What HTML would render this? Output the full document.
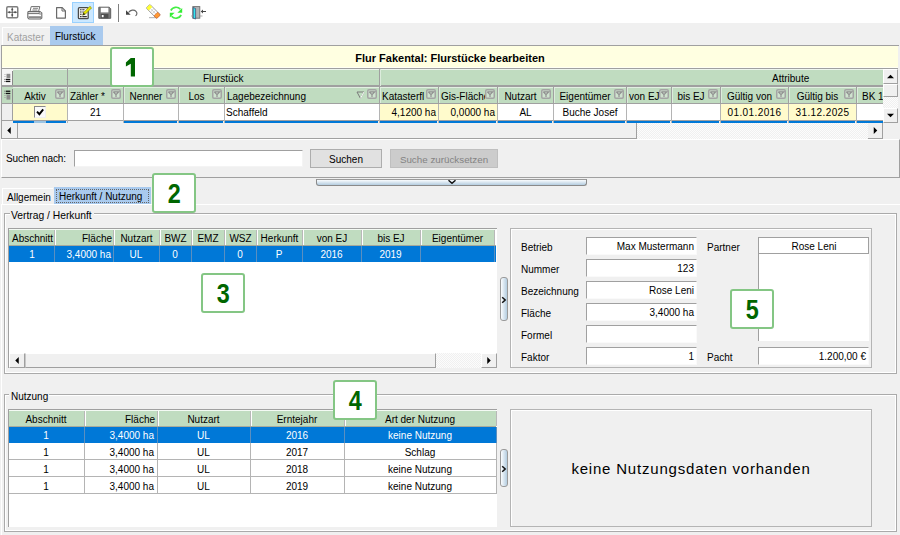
<!DOCTYPE html>
<html><head><meta charset="utf-8"><style>
*{box-sizing:border-box;margin:0;padding:0}
html,body{width:900px;height:535px;overflow:hidden}
body{position:relative;background:#f0f0f0;font-family:"Liberation Sans",sans-serif;font-size:10px;color:#000}
.a{position:absolute}
.t{position:absolute;white-space:nowrap;line-height:16px;height:16px}
.box{position:absolute;width:44px;height:40px;border:2px solid #84c684;border-radius:3px;background:#fff;color:#006600;font-weight:bold;font-size:26px;text-align:center;line-height:37px}
.inp{position:absolute;background:#fff;border-top:1px solid #a0a0a0;border-left:1px solid #a0a0a0;border-right:1px solid #fafafa;border-bottom:1px solid #fafafa;height:18px;line-height:16px;padding-right:2px;text-align:right;white-space:nowrap}
.btn3d{position:absolute;background:#f0f0f0;border-top:1px solid #fff;border-left:1px solid #fff;border-right:1px solid #a0a0a0;border-bottom:1px solid #a0a0a0}
</style></head><body>
<div class="a" style="left:0px;top:0px;width:900px;height:23px;background:#fff"></div>
<div class="a" style="left:72px;top:2px;width:22px;height:21px;background:#cce8ff;border:1px solid #99d1ff"></div>
<div class="a" style="left:118px;top:4px;width:1px;height:18px;background:#808080"></div>
<svg class="a" style="left:0;top:0" width="220" height="23" viewBox="0 0 220 23">
<!-- grid move -->
<rect x="6.75" y="6.75" width="11" height="11" rx="1.2" fill="#fff" stroke="#808080" stroke-width="1.5"/>
<path d="M12.25 7.5V17.2M7.5 12.25H17.2" stroke="#555" stroke-width="0.9"/>
<circle cx="12.25" cy="9.4" r="1" fill="#505050"/><circle cx="12.25" cy="15.1" r="1" fill="#505050"/>
<circle cx="9.4" cy="12.25" r="1" fill="#505050"/><circle cx="15.1" cy="12.25" r="1" fill="#505050"/>
<!-- printer -->
<path d="M31.2 6.6h8.6l-1.2 4.8h-8.6z" fill="#fff" stroke="#707070" stroke-width="1"/>
<path d="M33 8.3h5M32.4 10h5" stroke="#707070" stroke-width="0.9"/>
<path d="M28.2 11.6h11.6l2 1.4v5l-1.2 1h-11.6l-1.2-1.2v-5z" fill="#fff" stroke="#6a6a6a" stroke-width="1.1"/>
<path d="M28 13.6h12.5" stroke="#707070" stroke-width="1"/>
<path d="M28.5 16.2h12.5v2h-12.5z" fill="#8a8a8a"/>
<circle cx="40.2" cy="13" r="1.2" fill="#eee" stroke="#666" stroke-width="0.7"/>
<!-- new doc -->
<path d="M56.6 7.6h5.6l3.2 3.2v7.3h-8.8z" fill="#fff" stroke="#6a6a6a" stroke-width="1.2" stroke-linejoin="round"/>
<path d="M62 7.6v3.4h3.4" fill="none" stroke="#6a6a6a" stroke-width="1"/>
<!-- edit -->
<rect x="78.4" y="7.7" width="9.8" height="11" rx="1" fill="#f4f4f4" stroke="#4a4a4a" stroke-width="1.3"/>
<path d="M80 9.8h1.6M82.3 9.8h2.2M80 12h1.6M82.3 12h1.5M80 14.2h1.6M80 16.6h1.6M82.3 16.6h4.5" stroke="#333" stroke-width="1.1"/>
<path d="M82.6 15.2l1-2.6 6.3-6.3 1.7 1.6-6.3 6.3z" fill="#e8e800" stroke="#7a7a00" stroke-width="0.6"/>
<path d="M82.6 15.2l1-2.6 1.6 1.6z" fill="#222"/>
<!-- save -->
<path d="M98.8 7.2h10.4l1.5 1.5v9.6h-11.9z" fill="#7a7a7a" stroke="#606060" stroke-width="1" stroke-linejoin="round"/>
<rect x="100.8" y="7.8" width="7.6" height="4.6" fill="#fff"/>
<rect x="100.8" y="14" width="7.6" height="4.3" fill="#505050"/>
<rect x="101.8" y="15" width="1.8" height="2.2" fill="#fff"/>
<!-- separator -->
<!-- undo -->
<path d="M128.5 12.5c2-2.5 5.5-3.2 7.5-1.2 1.5 1.5 1 3.5-0.5 4.5" fill="none" stroke="#666" stroke-width="1.2"/>
<path d="M126 10.2v4.6h4.7z" fill="#444"/>
<!-- eraser -->
<path d="M149 17.6h8" stroke="#bbb" stroke-width="1.2"/>
<g transform="rotate(-45 153.5 11.8)">
<rect x="151" y="4" width="5.2" height="14.5" rx="0.8" fill="#fff" stroke="#777" stroke-width="0.7"/>
<rect x="151.2" y="4" width="4.8" height="3.6" fill="#ffff33"/>
<path d="M151.5 9.8h4.4M151.5 12.2h4.4M153.6 7.6v7.5" stroke="#bbb" stroke-width="0.6"/>
<path d="M151 15h5.2v2.8a1.2 1.2 0 0 1-1.2 1.2h-2.8a1.2 1.2 0 0 1-1.2-1.2z" fill="#ff9933" stroke="#c05020" stroke-width="0.5"/>
</g>
<!-- refresh -->
<path d="M170.8 10.5a5.8 5.8 0 0 1 9.6-1.2" fill="none" stroke="#44ee44" stroke-width="1.7"/>
<path d="M182.2 8v4.8h-4.8z" fill="#33ee33"/>
<path d="M181.2 15a5.8 5.8 0 0 1-9.6 1.2" fill="none" stroke="#44ee44" stroke-width="1.7"/>
<path d="M169.8 17.5v-4.8h4.8z" fill="#33ee33"/>
<!-- door -->
<rect x="192.8" y="6.6" width="7" height="11.6" fill="#b4b4b4" stroke="#6e6e6e" stroke-width="0.9"/>
<path d="M193.2 7.5l2.4 1v10.6l-2.4-1z" fill="#33e6ee" stroke="#336" stroke-width="0.6"/>
<path d="M191 16h2M200 16h2.5" stroke="#999" stroke-width="0.8"/>
<path d="M201.5 11.5h4.5" stroke="#444" stroke-width="1"/>
<path d="M200.8 11.5l2.2-2v4z" fill="#444"/>
</svg>
<div class="a" style="left:2px;top:27px;width:48px;height:18px;background:#f0f0f0;border-top:1px solid #fff;border-left:1px solid #fff"></div>
<div class="t" style="left:7px;top:30px;color:#a0a0a0">Kataster</div>
<div class="a" style="left:50px;top:26px;width:53px;height:19px;background:#a9caee"></div>
<div class="t" style="left:55px;top:29px;">Flurstück</div>
<div class="a" style="left:1px;top:45px;width:898px;height:94px;border-top:1px solid #a0a0a0;border-left:1px solid #a0a0a0;background:#f0f0f0"></div>
<div class="a" style="left:1px;top:138px;width:637px;height:1px;background:#a0a0a0"></div>
<div class="a" style="left:868px;top:138px;width:15px;height:1px;background:#a0a0a0"></div>
<div class="a" style="left:2px;top:46px;width:896px;height:22px;background:#ffffe1"></div>
<div class="t" style="left:0px;top:50px;width:900px;text-align:center;font-weight:bold;font-size:11px">Flur Fakental: Flurstücke bearbeiten</div>
<div class="a" style="left:2px;top:67px;width:896px;height:1px;background:#fffff4"></div>
<div class="a" style="left:2px;top:68px;width:896px;height:1px;background:#a0a0a0"></div>
<div class="a" style="left:2px;top:69px;width:11px;height:17px;background:#f6f6f6"></div>
<div class="a" style="left:13px;top:69px;width:870px;height:17px;background:#c0dcc0"></div>
<div class="a" style="left:13px;top:69px;width:870px;height:1px;background:#eef6ee"></div>
<div class="a" style="left:2px;top:85px;width:881px;height:2px;background:#a0a0a0"></div>
<div class="a" style="left:13px;top:87px;width:870px;height:1px;background:#e2efe2"></div>
<div class="a" style="left:2px;top:87px;width:11px;height:17px;background:#c0dcc0"></div>
<div class="a" style="left:13px;top:88px;width:870px;height:16px;background:#c0dcc0"></div>
<div class="a" style="left:2px;top:103px;width:881px;height:1px;background:#a0a0a0"></div>
<svg class="a" style="left:2px;top:71px" width="12" height="16" viewBox="0 0 12 16"><rect x="4.5" y="2.8" width="3.8" height="4.2" fill="#8c8c8c"/><path d="M2.3 3.5h1.4M2.3 5.5h1.4" stroke="#c4c4c4" stroke-width="1"/><rect x="4" y="7.8" width="4.3" height="1.3" fill="#111"/><rect x="4" y="9.8" width="4.3" height="1.3" fill="#111"/><path d="M2.3 8.4h1.4M2.3 10.4h1.4" stroke="#666" stroke-width="1"/></svg>
<svg class="a" style="left:2px;top:88px" width="12" height="16" viewBox="0 0 12 16"><rect x="4" y="2.6" width="4.3" height="1.3" fill="#111"/><rect x="4" y="4.8" width="4.3" height="1.3" fill="#111"/><path d="M2.3 3.2h1.4M2.3 5.4h1.4" stroke="#666" stroke-width="1"/><rect x="4.5" y="6.8" width="3.8" height="4.8" fill="#8c8c8c"/><path d="M2.3 7.5h1.4M2.3 9.5h1.4" stroke="#a8a8a8" stroke-width="1"/></svg>
<div class="a" style="left:2px;top:104px;width:11px;height:16px;background:#efefef"></div>
<div class="a" style="left:13px;top:104px;width:870px;height:16px;background:#fff"></div>
<div class="a" style="left:2px;top:120px;width:881px;height:1px;background:#a0a0a0"></div>
<div class="a" style="left:12px;top:71px;width:1px;height:14px;background:#8a8a8a"></div>
<div class="a" style="left:12px;top:89px;width:1px;height:14px;background:#8a8a8a"></div>
<div class="a" style="left:12px;top:104px;width:1px;height:17px;background:#a0a0a0"></div>
<div class="a" style="left:67px;top:87px;width:1px;height:17px;background:#a0a0a0"></div>
<div class="a" style="left:67px;top:104px;width:1px;height:19px;background:#b4b4b4"></div>
<div class="a" style="left:68px;top:88px;width:1px;height:15px;background:#dcecdc"></div>
<div class="a" style="left:123px;top:87px;width:1px;height:17px;background:#a0a0a0"></div>
<div class="a" style="left:123px;top:104px;width:1px;height:19px;background:#b4b4b4"></div>
<div class="a" style="left:124px;top:88px;width:1px;height:15px;background:#dcecdc"></div>
<div class="a" style="left:178px;top:87px;width:1px;height:17px;background:#a0a0a0"></div>
<div class="a" style="left:178px;top:104px;width:1px;height:19px;background:#b4b4b4"></div>
<div class="a" style="left:179px;top:88px;width:1px;height:15px;background:#dcecdc"></div>
<div class="a" style="left:224px;top:87px;width:1px;height:17px;background:#a0a0a0"></div>
<div class="a" style="left:224px;top:104px;width:1px;height:19px;background:#b4b4b4"></div>
<div class="a" style="left:225px;top:88px;width:1px;height:15px;background:#dcecdc"></div>
<div class="a" style="left:379px;top:87px;width:1px;height:17px;background:#a0a0a0"></div>
<div class="a" style="left:379px;top:104px;width:1px;height:19px;background:#b4b4b4"></div>
<div class="a" style="left:380px;top:88px;width:1px;height:15px;background:#dcecdc"></div>
<div class="a" style="left:438px;top:87px;width:1px;height:17px;background:#a0a0a0"></div>
<div class="a" style="left:438px;top:104px;width:1px;height:19px;background:#b4b4b4"></div>
<div class="a" style="left:439px;top:88px;width:1px;height:15px;background:#dcecdc"></div>
<div class="a" style="left:497px;top:87px;width:1px;height:17px;background:#a0a0a0"></div>
<div class="a" style="left:497px;top:104px;width:1px;height:19px;background:#b4b4b4"></div>
<div class="a" style="left:498px;top:88px;width:1px;height:15px;background:#dcecdc"></div>
<div class="a" style="left:553px;top:87px;width:1px;height:17px;background:#a0a0a0"></div>
<div class="a" style="left:553px;top:104px;width:1px;height:19px;background:#b4b4b4"></div>
<div class="a" style="left:554px;top:88px;width:1px;height:15px;background:#dcecdc"></div>
<div class="a" style="left:626px;top:87px;width:1px;height:17px;background:#a0a0a0"></div>
<div class="a" style="left:626px;top:104px;width:1px;height:19px;background:#b4b4b4"></div>
<div class="a" style="left:627px;top:88px;width:1px;height:15px;background:#dcecdc"></div>
<div class="a" style="left:671px;top:87px;width:1px;height:17px;background:#a0a0a0"></div>
<div class="a" style="left:671px;top:104px;width:1px;height:19px;background:#b4b4b4"></div>
<div class="a" style="left:672px;top:88px;width:1px;height:15px;background:#dcecdc"></div>
<div class="a" style="left:720px;top:87px;width:1px;height:17px;background:#a0a0a0"></div>
<div class="a" style="left:720px;top:104px;width:1px;height:19px;background:#b4b4b4"></div>
<div class="a" style="left:721px;top:88px;width:1px;height:15px;background:#dcecdc"></div>
<div class="a" style="left:788px;top:87px;width:1px;height:17px;background:#a0a0a0"></div>
<div class="a" style="left:788px;top:104px;width:1px;height:19px;background:#b4b4b4"></div>
<div class="a" style="left:789px;top:88px;width:1px;height:15px;background:#dcecdc"></div>
<div class="a" style="left:856px;top:87px;width:1px;height:17px;background:#a0a0a0"></div>
<div class="a" style="left:856px;top:104px;width:1px;height:19px;background:#b4b4b4"></div>
<div class="a" style="left:857px;top:88px;width:1px;height:15px;background:#dcecdc"></div>
<div class="a" style="left:67px;top:69px;width:1px;height:17px;background:#a0a0a0"></div>
<div class="a" style="left:379px;top:69px;width:1px;height:17px;background:#a0a0a0"></div>
<div class="a" style="left:380px;top:69px;width:1px;height:17px;background:#dcecdc"></div>
<div class="t" style="left:203px;top:71px;">Flurstück</div>
<div class="t" style="left:772px;top:71px;">Attribute</div>
<div class="t" style="left:13px;top:89px;width:44px;text-align:center;overflow:hidden">Aktiv</div>
<svg class="a" style="left:55px;top:89px" width="10" height="10" viewBox="0 0 10 10"><rect x="0.75" y="0.75" width="8.5" height="8.5" rx="1.2" fill="#cfe3cf" stroke="#a4a4a4" stroke-width="1.5"/><path d="M2.3 2.8h5.4L5 5.6 2.3 2.8M5 5.4v2.6" fill="none" stroke="#909090" stroke-width="1.2"/></svg>
<div class="t" style="left:70px;top:89px;width:41px;overflow:hidden">Zähler *</div>
<svg class="a" style="left:111px;top:89px" width="10" height="10" viewBox="0 0 10 10"><rect x="0.75" y="0.75" width="8.5" height="8.5" rx="1.2" fill="#cfe3cf" stroke="#a4a4a4" stroke-width="1.5"/><path d="M2.3 2.8h5.4L5 5.6 2.3 2.8M5 5.4v2.6" fill="none" stroke="#909090" stroke-width="1.2"/></svg>
<div class="t" style="left:124px;top:89px;width:44px;text-align:center;overflow:hidden">Nenner</div>
<svg class="a" style="left:166px;top:89px" width="10" height="10" viewBox="0 0 10 10"><rect x="0.75" y="0.75" width="8.5" height="8.5" rx="1.2" fill="#cfe3cf" stroke="#a4a4a4" stroke-width="1.5"/><path d="M2.3 2.8h5.4L5 5.6 2.3 2.8M5 5.4v2.6" fill="none" stroke="#909090" stroke-width="1.2"/></svg>
<div class="t" style="left:179px;top:89px;width:35px;text-align:center;overflow:hidden">Los</div>
<svg class="a" style="left:212px;top:89px" width="10" height="10" viewBox="0 0 10 10"><rect x="0.75" y="0.75" width="8.5" height="8.5" rx="1.2" fill="#cfe3cf" stroke="#a4a4a4" stroke-width="1.5"/><path d="M2.3 2.8h5.4L5 5.6 2.3 2.8M5 5.4v2.6" fill="none" stroke="#909090" stroke-width="1.2"/></svg>
<div class="t" style="left:227px;top:89px;width:140px;overflow:hidden">Lagebezeichnung</div>
<svg class="a" style="left:367px;top:89px" width="10" height="10" viewBox="0 0 10 10"><rect x="0.75" y="0.75" width="8.5" height="8.5" rx="1.2" fill="#cfe3cf" stroke="#a4a4a4" stroke-width="1.5"/><path d="M2.3 2.8h5.4L5 5.6 2.3 2.8M5 5.4v2.6" fill="none" stroke="#909090" stroke-width="1.2"/></svg>
<div class="t" style="left:382px;top:89px;width:44px;overflow:hidden">Katasterfl</div>
<svg class="a" style="left:426px;top:89px" width="10" height="10" viewBox="0 0 10 10"><rect x="0.75" y="0.75" width="8.5" height="8.5" rx="1.2" fill="#cfe3cf" stroke="#a4a4a4" stroke-width="1.5"/><path d="M2.3 2.8h5.4L5 5.6 2.3 2.8M5 5.4v2.6" fill="none" stroke="#909090" stroke-width="1.2"/></svg>
<div class="t" style="left:441px;top:89px;width:44px;overflow:hidden">Gis-Fläche</div>
<svg class="a" style="left:485px;top:89px" width="10" height="10" viewBox="0 0 10 10"><rect x="0.75" y="0.75" width="8.5" height="8.5" rx="1.2" fill="#cfe3cf" stroke="#a4a4a4" stroke-width="1.5"/><path d="M2.3 2.8h5.4L5 5.6 2.3 2.8M5 5.4v2.6" fill="none" stroke="#909090" stroke-width="1.2"/></svg>
<div class="t" style="left:498px;top:89px;width:45px;text-align:center;overflow:hidden">Nutzart</div>
<svg class="a" style="left:541px;top:89px" width="10" height="10" viewBox="0 0 10 10"><rect x="0.75" y="0.75" width="8.5" height="8.5" rx="1.2" fill="#cfe3cf" stroke="#a4a4a4" stroke-width="1.5"/><path d="M2.3 2.8h5.4L5 5.6 2.3 2.8M5 5.4v2.6" fill="none" stroke="#909090" stroke-width="1.2"/></svg>
<div class="t" style="left:554px;top:89px;width:62px;text-align:center;overflow:hidden">Eigentümer</div>
<svg class="a" style="left:614px;top:89px" width="10" height="10" viewBox="0 0 10 10"><rect x="0.75" y="0.75" width="8.5" height="8.5" rx="1.2" fill="#cfe3cf" stroke="#a4a4a4" stroke-width="1.5"/><path d="M2.3 2.8h5.4L5 5.6 2.3 2.8M5 5.4v2.6" fill="none" stroke="#909090" stroke-width="1.2"/></svg>
<div class="t" style="left:629px;top:89px;width:30px;overflow:hidden">von EJ</div>
<svg class="a" style="left:659px;top:89px" width="10" height="10" viewBox="0 0 10 10"><rect x="0.75" y="0.75" width="8.5" height="8.5" rx="1.2" fill="#cfe3cf" stroke="#a4a4a4" stroke-width="1.5"/><path d="M2.3 2.8h5.4L5 5.6 2.3 2.8M5 5.4v2.6" fill="none" stroke="#909090" stroke-width="1.2"/></svg>
<div class="t" style="left:672px;top:89px;width:38px;text-align:center;overflow:hidden">bis EJ</div>
<svg class="a" style="left:708px;top:89px" width="10" height="10" viewBox="0 0 10 10"><rect x="0.75" y="0.75" width="8.5" height="8.5" rx="1.2" fill="#cfe3cf" stroke="#a4a4a4" stroke-width="1.5"/><path d="M2.3 2.8h5.4L5 5.6 2.3 2.8M5 5.4v2.6" fill="none" stroke="#909090" stroke-width="1.2"/></svg>
<div class="t" style="left:721px;top:89px;width:57px;text-align:center;overflow:hidden">Gültig von</div>
<svg class="a" style="left:776px;top:89px" width="10" height="10" viewBox="0 0 10 10"><rect x="0.75" y="0.75" width="8.5" height="8.5" rx="1.2" fill="#cfe3cf" stroke="#a4a4a4" stroke-width="1.5"/><path d="M2.3 2.8h5.4L5 5.6 2.3 2.8M5 5.4v2.6" fill="none" stroke="#909090" stroke-width="1.2"/></svg>
<div class="t" style="left:789px;top:89px;width:57px;text-align:center;overflow:hidden">Gültig bis</div>
<svg class="a" style="left:844px;top:89px" width="10" height="10" viewBox="0 0 10 10"><rect x="0.75" y="0.75" width="8.5" height="8.5" rx="1.2" fill="#cfe3cf" stroke="#a4a4a4" stroke-width="1.5"/><path d="M2.3 2.8h5.4L5 5.6 2.3 2.8M5 5.4v2.6" fill="none" stroke="#909090" stroke-width="1.2"/></svg>
<div class="t" style="left:862px;top:89px;width:23px;overflow:hidden">BK 1</div>
<svg class="a" style="left:356px;top:91px" width="9" height="8" viewBox="0 0 9 8"><path d="M1 1h7L4.5 7.5z" fill="none" stroke="#7a7a7a" stroke-width="1"/><path d="M8 1L4.5 7.5" stroke="#fff" stroke-width="1"/></svg>
<div class="a" style="left:13px;top:104px;width:54px;height:16px;background:#fffbcc"></div>
<div class="a" style="left:380px;top:104px;width:58px;height:16px;background:#fffbcc"></div>
<div class="a" style="left:439px;top:104px;width:58px;height:16px;background:#fffbcc"></div>
<div class="a" style="left:721px;top:104px;width:67px;height:16px;background:#fffbcc"></div>
<div class="a" style="left:789px;top:104px;width:67px;height:16px;background:#fffbcc"></div>
<div class="a" style="left:13px;top:121px;width:53px;height:2px;background:#0078d7"></div>
<div class="a" style="left:124px;top:121px;width:53px;height:2px;background:#0078d7"></div>
<div class="a" style="left:179px;top:121px;width:44px;height:2px;background:#0078d7"></div>
<div class="a" style="left:225px;top:121px;width:153px;height:2px;background:#0078d7"></div>
<div class="a" style="left:380px;top:121px;width:57px;height:2px;background:#0078d7"></div>
<div class="a" style="left:439px;top:121px;width:57px;height:2px;background:#0078d7"></div>
<div class="a" style="left:498px;top:121px;width:54px;height:2px;background:#0078d7"></div>
<div class="a" style="left:554px;top:121px;width:71px;height:2px;background:#0078d7"></div>
<div class="a" style="left:627px;top:121px;width:43px;height:2px;background:#0078d7"></div>
<div class="a" style="left:672px;top:121px;width:47px;height:2px;background:#0078d7"></div>
<div class="a" style="left:721px;top:121px;width:66px;height:2px;background:#0078d7"></div>
<div class="a" style="left:789px;top:121px;width:66px;height:2px;background:#0078d7"></div>
<div class="a" style="left:857px;top:121px;width:26px;height:2px;background:#0078d7"></div>
<div class="a" style="left:34px;top:121px;width:12px;height:2px;background:#9cc4e4"></div>
<div class="a" style="left:34px;top:106px;width:12px;height:12px;background:#fafafa;border-top:1px solid #8a8a8a;border-left:1px solid #8a8a8a;border-right:1px solid #f0f0f0;border-bottom:1px solid #f0f0f0"></div>
<svg class="a" style="left:35px;top:107px" width="10" height="10" viewBox="0 0 10 10"><path d="M2 4.6l2.4 2.6L8.2 2.4" fill="none" stroke="#000" stroke-width="1.9"/></svg>
<div class="t" style="left:68px;top:105px;width:55px;text-align:center;">21</div>
<div class="t" style="left:226px;top:105px;">Schaffeld</div>
<div class="t" style="left:380px;top:105px;width:56px;text-align:right;">4,1200 ha</div>
<div class="t" style="left:439px;top:105px;width:56px;text-align:right;">0,0000 ha</div>
<div class="t" style="left:498px;top:105px;width:55px;text-align:center;">AL</div>
<div class="t" style="left:554px;top:105px;width:72px;text-align:center;">Buche Josef</div>
<div class="t" style="left:721px;top:105px;width:67px;text-align:center;letter-spacing:0.4px">01.01.2016</div>
<div class="t" style="left:789px;top:105px;width:67px;text-align:center;letter-spacing:0.4px">31.12.2025</div>
<div class="a" style="left:883px;top:69px;width:15px;height:54px;background:repeating-conic-gradient(#f0f0f0 0 25%, #fcfcfc 0 50%) 0 0/2px 2px"></div>
<div class="btn3d" style="left:883px;top:69px;width:15px;height:15px"></div>
<svg class="a" style="left:883px;top:69px" width="15" height="15" viewBox="0 0 15 15"><polygon points="4.0,9.25 11.0,9.25 7.5,5.75" fill="#000"/></svg>
<div class="btn3d" style="left:883px;top:84px;width:15px;height:13px"></div>
<div class="btn3d" style="left:883px;top:108px;width:15px;height:15px"></div>
<svg class="a" style="left:883px;top:108px" width="15" height="15" viewBox="0 0 15 15"><polygon points="4.0,5.75 11.0,5.75 7.5,9.25" fill="#000"/></svg>
<div class="a" style="left:2px;top:123px;width:881px;height:15px;background:#f0f0f0"></div>
<div class="a" style="left:637px;top:123px;width:231px;height:16px;background:repeating-conic-gradient(#f0f0f0 0 25%, #fcfcfc 0 50%) 0 0/2px 2px"></div>
<div class="a" style="left:2px;top:123px;width:16px;height:15px;border-right:1px solid #a0a0a0"></div>
<svg class="a" style="left:1px;top:123px" width="16" height="15" viewBox="0 0 16 15"><polygon points="9.75,4.0 9.75,11.0 6.25,7.5" fill="#000"/></svg>
<div class="btn3d" style="left:18px;top:123px;width:619px;height:15px;border-top:none;border-left:none;border-bottom:none"></div>
<div class="btn3d" style="left:868px;top:123px;width:15px;height:15px;border-top:none;border-left:none;border-bottom:none"></div>
<svg class="a" style="left:868px;top:123px" width="15" height="15" viewBox="0 0 15 15"><polygon points="5.75,4.0 5.75,11.0 9.25,7.5" fill="#000"/></svg>
<div class="a" style="left:1px;top:139px;width:899px;height:39px;border-top:1px solid #fff;border-left:1px solid #fff;border-bottom:1px solid #a0a0a0;border-right:1px solid #a0a0a0"></div>
<div class="t" style="left:6px;top:151px;letter-spacing:-0.1px">Suchen nach:</div>
<div class="a" style="left:74px;top:150px;width:229px;height:17px;background:#fff;border-top:1px solid #a0a0a0;border-left:1px solid #a0a0a0;border-right:1px solid #f4f4f4;border-bottom:1px solid #f4f4f4"></div>
<div class="a" style="left:310px;top:149px;width:72px;height:19px;background:#e1e1e1;border:1px solid #adadad"></div>
<div class="t" style="left:310px;top:152px;width:72px;text-align:center;">Suchen</div>
<div class="a" style="left:390px;top:149px;width:108px;height:19px;background:#cccccc;border:1px solid #bfbfbf"></div>
<div class="t" style="left:390px;top:152px;width:108px;text-align:center;color:#838383;font-size:9.8px">Suche zurücksetzen</div>
<div class="a" style="left:316px;top:179px;width:271px;height:7px;background:linear-gradient(#fafcfe,#b4cde0);border:1px solid #8a8a8a;border-top:1px solid #9a9a9a;border-radius:0 0 3px 3px"></div>
<svg class="a" style="left:447px;top:179px" width="10" height="6" viewBox="0 0 10 6"><path d="M1.5 1.2L5 4.2 8.5 1.2" fill="none" stroke="#111" stroke-width="1.5"/></svg>
<div class="a" style="left:2px;top:188px;width:51px;height:16px;background:#f0f0f0;border-top:1px solid #fff;border-left:1px solid #fff"></div>
<div class="t" style="left:7px;top:190px;">Allgemein</div>
<div class="a" style="left:54px;top:187px;width:97px;height:17px;background:#a9caee"></div>
<div class="a" style="left:56px;top:189px;width:93px;height:14px;border:1px dotted #666"></div>
<div class="t" style="left:59px;top:189px;">Herkunft / Nutzung</div>
<div class="a" style="left:1px;top:204px;width:899px;height:331px;border-top:1px solid #fff;border-left:1px solid #fff"></div>
<div class="a" style="left:4px;top:213px;width:893px;height:161px;border:1px solid #aaa;box-shadow:inset 1px 1px 0 #fff, inset -1px -1px 0 #fff"></div>
<div class="a" style="left:10px;top:207px;width:84px;height:12px;background:#f0f0f0"></div>
<div class="t" style="left:11px;top:208px;font-size:10.3px">Vertrag / Herkunft</div>
<div class="a" style="left:8px;top:228px;width:489px;height:140px;background:#fff;border-left:1px solid #a0a0a0;border-top:1px solid #a0a0a0"></div>
<div class="a" style="left:9px;top:229px;width:487px;height:1px;background:#f4faf4"></div>
<div class="a" style="left:9px;top:230px;width:487px;height:16px;background:#c0dcc0"></div>
<div class="a" style="left:9px;top:246px;width:487px;height:16px;background:#0078d7"></div>
<div class="t" style="left:12px;top:231px;width:43px;text-align:left;">Abschnitt</div>
<div class="t" style="left:10px;top:247px;width:42px;text-align:left;color:#fff"></div>
<div class="a" style="left:54px;top:230px;width:1px;height:15px;background:#b8b8b8"></div>
<div class="a" style="left:55px;top:230px;width:1px;height:15px;background:#fff"></div>
<div class="a" style="left:54px;top:246px;width:1px;height:16px;background:#5a8fc0"></div>
<div class="t" style="left:56px;top:231px;width:56px;text-align:right;">Fläche</div>
<div class="t" style="left:56px;top:247px;width:55px;text-align:right;color:#fff">3,4000 ha</div>
<div class="a" style="left:113px;top:230px;width:1px;height:15px;background:#b8b8b8"></div>
<div class="a" style="left:114px;top:230px;width:1px;height:15px;background:#fff"></div>
<div class="a" style="left:113px;top:246px;width:1px;height:16px;background:#5a8fc0"></div>
<div class="t" style="left:115px;top:231px;width:43px;text-align:center;">Nutzart</div>
<div class="t" style="left:115px;top:247px;width:42px;text-align:center;color:#fff">UL</div>
<div class="a" style="left:159px;top:230px;width:1px;height:15px;background:#b8b8b8"></div>
<div class="a" style="left:160px;top:230px;width:1px;height:15px;background:#fff"></div>
<div class="a" style="left:159px;top:246px;width:1px;height:16px;background:#5a8fc0"></div>
<div class="t" style="left:161px;top:231px;width:29px;text-align:center;">BWZ</div>
<div class="t" style="left:161px;top:247px;width:28px;text-align:center;color:#fff">0</div>
<div class="a" style="left:191px;top:230px;width:1px;height:15px;background:#b8b8b8"></div>
<div class="a" style="left:192px;top:230px;width:1px;height:15px;background:#fff"></div>
<div class="a" style="left:191px;top:246px;width:1px;height:16px;background:#5a8fc0"></div>
<div class="t" style="left:193px;top:231px;width:30px;text-align:center;">EMZ</div>
<div class="t" style="left:193px;top:247px;width:29px;text-align:center;color:#fff"></div>
<div class="a" style="left:224px;top:230px;width:1px;height:15px;background:#b8b8b8"></div>
<div class="a" style="left:225px;top:230px;width:1px;height:15px;background:#fff"></div>
<div class="a" style="left:224px;top:246px;width:1px;height:16px;background:#5a8fc0"></div>
<div class="t" style="left:226px;top:231px;width:29px;text-align:center;">WSZ</div>
<div class="t" style="left:226px;top:247px;width:28px;text-align:center;color:#fff">0</div>
<div class="a" style="left:256px;top:230px;width:1px;height:15px;background:#b8b8b8"></div>
<div class="a" style="left:257px;top:230px;width:1px;height:15px;background:#fff"></div>
<div class="a" style="left:256px;top:246px;width:1px;height:16px;background:#5a8fc0"></div>
<div class="t" style="left:258px;top:231px;width:43px;text-align:center;">Herkunft</div>
<div class="t" style="left:258px;top:247px;width:42px;text-align:center;color:#fff">P</div>
<div class="a" style="left:302px;top:230px;width:1px;height:15px;background:#b8b8b8"></div>
<div class="a" style="left:303px;top:230px;width:1px;height:15px;background:#fff"></div>
<div class="a" style="left:302px;top:246px;width:1px;height:16px;background:#5a8fc0"></div>
<div class="t" style="left:304px;top:231px;width:56px;text-align:center;">von EJ</div>
<div class="t" style="left:304px;top:247px;width:55px;text-align:center;color:#fff">2016</div>
<div class="a" style="left:361px;top:230px;width:1px;height:15px;background:#b8b8b8"></div>
<div class="a" style="left:362px;top:230px;width:1px;height:15px;background:#fff"></div>
<div class="a" style="left:361px;top:246px;width:1px;height:16px;background:#5a8fc0"></div>
<div class="t" style="left:363px;top:231px;width:56px;text-align:center;">bis EJ</div>
<div class="t" style="left:363px;top:247px;width:55px;text-align:center;color:#fff">2019</div>
<div class="a" style="left:420px;top:230px;width:1px;height:15px;background:#b8b8b8"></div>
<div class="a" style="left:421px;top:230px;width:1px;height:15px;background:#fff"></div>
<div class="a" style="left:420px;top:246px;width:1px;height:16px;background:#5a8fc0"></div>
<div class="t" style="left:422px;top:231px;width:71px;text-align:center;">Eigentümer</div>
<div class="t" style="left:422px;top:247px;width:70px;text-align:center;color:#fff"></div>
<div class="a" style="left:494px;top:230px;width:1px;height:15px;background:#b8b8b8"></div>
<div class="a" style="left:495px;top:230px;width:1px;height:15px;background:#fff"></div>
<div class="a" style="left:494px;top:246px;width:1px;height:16px;background:#5a8fc0"></div>
<div class="t" style="left:9px;top:247px;width:46px;text-align:center;color:#fff">1</div>
<div class="a" style="left:9px;top:245px;width:487px;height:1px;background:#a4a89c"></div>
<div class="a" style="left:9px;top:353px;width:488px;height:15px;background:#f0f0f0"></div>
<div class="a" style="left:436px;top:353px;width:45px;height:15px;background:repeating-conic-gradient(#f0f0f0 0 25%, #fcfcfc 0 50%) 0 0/2px 2px"></div>
<div class="btn3d" style="left:9px;top:353px;width:16px;height:15px"></div>
<svg class="a" style="left:9px;top:353px" width="16" height="15" viewBox="0 0 16 15"><polygon points="9.75,4.0 9.75,11.0 6.25,7.5" fill="#000"/></svg>
<div class="btn3d" style="left:25px;top:353px;width:411px;height:15px;border-left:1px solid #c8c8c8"></div>
<div class="btn3d" style="left:481px;top:353px;width:16px;height:15px"></div>
<svg class="a" style="left:481px;top:353px" width="16" height="15" viewBox="0 0 16 15"><polygon points="6.25,4.0 6.25,11.0 9.75,7.5" fill="#000"/></svg>
<div class="a" style="left:500px;top:277px;width:8px;height:44px;background:linear-gradient(90deg,#fbfdff,#b4cde0);border:1px solid #9a9a9a;border-radius:3px"></div>
<svg class="a" style="left:501px;top:296px" width="6" height="8" viewBox="0 0 6 8"><path d="M1.2 1.2L4.2 4 1.2 6.8" fill="none" stroke="#111" stroke-width="1.5"/></svg>
<div class="a" style="left:510px;top:228px;width:362px;height:140px;border:1px solid #b4b4b4;box-shadow:inset 1px 1px 0 #fff"></div>
<div class="t" style="left:521px;top:240px;">Betrieb</div>
<div class="inp" style="left:586px;top:237px;width:111px;line-height:18px">Max Mustermann</div>
<div class="t" style="left:521px;top:262px;">Nummer</div>
<div class="inp" style="left:586px;top:259px;width:111px;line-height:18px">123</div>
<div class="t" style="left:521px;top:284px;">Bezeichnung</div>
<div class="inp" style="left:586px;top:281px;width:111px;line-height:18px">Rose Leni</div>
<div class="t" style="left:521px;top:306px;">Fläche</div>
<div class="inp" style="left:586px;top:303px;width:111px;line-height:18px">3,4000 ha</div>
<div class="t" style="left:521px;top:328px;">Formel</div>
<div class="inp" style="left:586px;top:325px;width:111px;line-height:18px"></div>
<div class="t" style="left:521px;top:350px;">Faktor</div>
<div class="inp" style="left:586px;top:347px;width:111px;line-height:18px">1</div>
<div class="t" style="left:707px;top:240px;">Partner</div>
<div class="t" style="left:707px;top:350px;">Pacht</div>
<div class="a" style="left:758px;top:237px;width:111px;height:104px;background:#fff;border-left:1px solid #a0a0a0;border-top:1px solid #a0a0a0"></div>
<div class="a" style="left:759px;top:253px;width:110px;height:1px;background:#a0a0a0"></div>
<div class="a" style="left:868px;top:237px;width:1px;height:17px;background:#a0a0a0"></div>
<div class="t" style="left:759px;top:239px;width:110px;text-align:center;">Rose Leni</div>
<div class="inp" style="left:758px;top:347px;width:111px;line-height:18px">1.200,00 €</div>
<div class="a" style="left:4px;top:394px;width:893px;height:138px;border:1px solid #aaa;box-shadow:inset 1px 1px 0 #fff, inset -1px -1px 0 #fff"></div>
<div class="a" style="left:9px;top:388px;width:40px;height:12px;background:#f0f0f0"></div>
<div class="t" style="left:11px;top:389px;">Nutzung</div>
<div class="a" style="left:8px;top:409px;width:489px;height:118px;background:#fff;border-left:1px solid #a0a0a0;border-top:1px solid #a0a0a0"></div>
<div class="a" style="left:9px;top:410px;width:487px;height:1px;background:#f4faf4"></div>
<div class="a" style="left:9px;top:411px;width:487px;height:16px;background:#c0dcc0"></div>
<div class="a" style="left:9px;top:427px;width:487px;height:16px;background:#0078d7"></div>
<div class="a" style="left:9px;top:426px;width:487px;height:1px;background:#a8ac9c"></div>
<div class="t" style="left:10px;top:412px;width:72px;text-align:center;">Abschnitt</div>
<div class="t" style="left:10px;top:428px;width:72px;text-align:center;color:#fff">1</div>
<div class="t" style="left:10px;top:445px;width:72px;text-align:center;">1</div>
<div class="t" style="left:10px;top:462px;width:72px;text-align:center;">1</div>
<div class="t" style="left:10px;top:479px;width:72px;text-align:center;">1</div>
<div class="a" style="left:84px;top:411px;width:1px;height:15px;background:#b8b8b8"></div>
<div class="a" style="left:85px;top:411px;width:1px;height:15px;background:#fff"></div>
<div class="a" style="left:84px;top:427px;width:1px;height:16px;background:#5a8fc0"></div>
<div class="a" style="left:84px;top:443px;width:1px;height:51px;background:#b4b4b4"></div>
<div class="t" style="left:86px;top:412px;width:69px;text-align:right;">Fläche</div>
<div class="t" style="left:86px;top:428px;width:68px;text-align:right;color:#fff">3,4000 ha</div>
<div class="t" style="left:86px;top:445px;width:68px;text-align:right;">3,4000 ha</div>
<div class="t" style="left:86px;top:462px;width:68px;text-align:right;">3,4000 ha</div>
<div class="t" style="left:86px;top:479px;width:68px;text-align:right;">3,4000 ha</div>
<div class="a" style="left:157px;top:411px;width:1px;height:15px;background:#b8b8b8"></div>
<div class="a" style="left:158px;top:411px;width:1px;height:15px;background:#fff"></div>
<div class="a" style="left:157px;top:427px;width:1px;height:16px;background:#5a8fc0"></div>
<div class="a" style="left:157px;top:443px;width:1px;height:51px;background:#b4b4b4"></div>
<div class="t" style="left:159px;top:412px;width:89px;text-align:center;">Nutzart</div>
<div class="t" style="left:159px;top:428px;width:89px;text-align:center;color:#fff">UL</div>
<div class="t" style="left:159px;top:445px;width:89px;text-align:center;">UL</div>
<div class="t" style="left:159px;top:462px;width:89px;text-align:center;">UL</div>
<div class="t" style="left:159px;top:479px;width:89px;text-align:center;">UL</div>
<div class="a" style="left:250px;top:411px;width:1px;height:15px;background:#b8b8b8"></div>
<div class="a" style="left:251px;top:411px;width:1px;height:15px;background:#fff"></div>
<div class="a" style="left:250px;top:427px;width:1px;height:16px;background:#5a8fc0"></div>
<div class="a" style="left:250px;top:443px;width:1px;height:51px;background:#b4b4b4"></div>
<div class="t" style="left:252px;top:412px;width:90px;text-align:center;">Erntejahr</div>
<div class="t" style="left:252px;top:428px;width:90px;text-align:center;color:#fff">2016</div>
<div class="t" style="left:252px;top:445px;width:90px;text-align:center;">2017</div>
<div class="t" style="left:252px;top:462px;width:90px;text-align:center;">2018</div>
<div class="t" style="left:252px;top:479px;width:90px;text-align:center;">2019</div>
<div class="a" style="left:344px;top:411px;width:1px;height:15px;background:#b8b8b8"></div>
<div class="a" style="left:345px;top:411px;width:1px;height:15px;background:#fff"></div>
<div class="a" style="left:344px;top:427px;width:1px;height:16px;background:#5a8fc0"></div>
<div class="a" style="left:344px;top:443px;width:1px;height:51px;background:#b4b4b4"></div>
<div class="t" style="left:346px;top:412px;width:148px;text-align:center;">Art der Nutzung</div>
<div class="t" style="left:346px;top:428px;width:148px;text-align:center;color:#fff">keine Nutzung</div>
<div class="t" style="left:346px;top:445px;width:148px;text-align:center;">Schlag</div>
<div class="t" style="left:346px;top:462px;width:148px;text-align:center;">keine Nutzung</div>
<div class="t" style="left:346px;top:479px;width:148px;text-align:center;">keine Nutzung</div>
<div class="a" style="left:496px;top:411px;width:1px;height:15px;background:#b8b8b8"></div>
<div class="a" style="left:496px;top:427px;width:1px;height:16px;background:#5a8fc0"></div>
<div class="a" style="left:496px;top:443px;width:1px;height:51px;background:#b4b4b4"></div>
<div class="a" style="left:9px;top:459px;width:488px;height:1px;background:#b4b4b4"></div>
<div class="a" style="left:9px;top:476px;width:488px;height:1px;background:#b4b4b4"></div>
<div class="a" style="left:9px;top:493px;width:488px;height:1px;background:#b4b4b4"></div>
<div class="a" style="left:500px;top:449px;width:8px;height:38px;background:linear-gradient(90deg,#fbfdff,#b4cde0);border:1px solid #9a9a9a;border-radius:3px"></div>
<svg class="a" style="left:501px;top:465px" width="6" height="8" viewBox="0 0 6 8"><path d="M1.2 1.2L4.2 4 1.2 6.8" fill="none" stroke="#111" stroke-width="1.5"/></svg>
<div class="a" style="left:510px;top:409px;width:362px;height:118px;border:1px solid #b4b4b4;box-shadow:inset 1px 1px 0 #fff"></div>
<div class="t" style="left:510px;top:459px;width:362px;text-align:center;font-size:15px;line-height:20px;height:20px;letter-spacing:0.8px">keine Nutzungsdaten vorhanden</div>
<div class="box" style="left:110px;top:47px"><svg style="position:absolute;left:-2px;top:-2px" width="44" height="40" viewBox="0 0 44 40"><path d="M20.8 10.9H25V29.4H20.8V16.8L15.9 19.6V15.6Z" fill="#006600"/></svg></div>
<div class="box" style="left:152px;top:173px"><span style="display:inline-block;transform:translateY(1px) scale(0.9,1.04)">2</span></div>
<div class="box" style="left:201px;top:273px"><span style="display:inline-block;transform:translateY(1px) scale(0.9,1.04)">3</span></div>
<div class="box" style="left:333px;top:380px"><span style="display:inline-block;transform:translateY(1px) scale(0.9,1.04)">4</span></div>
<div class="box" style="left:730px;top:289px"><span style="display:inline-block;transform:translateY(1px) scale(0.9,1.04)">5</span></div>
</body></html>
